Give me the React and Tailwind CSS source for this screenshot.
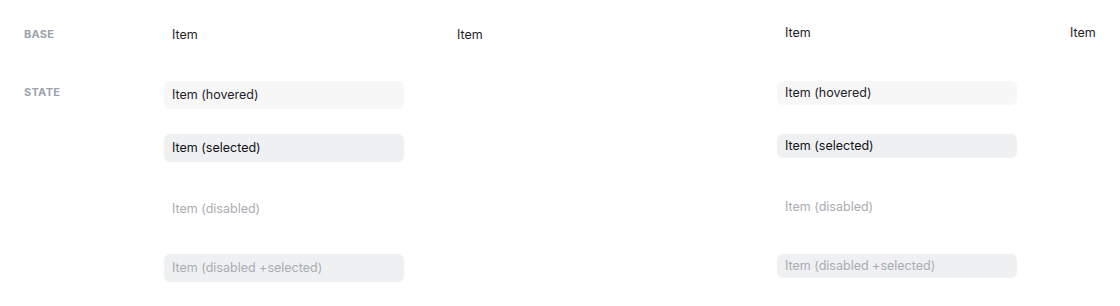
import React from "react";

const font = { fontFamily: "Inter, 'Noto Sans', sans-serif" };

function Item({ children, variant = "base", size = "lg" }) {
  const h = size === "lg" ? "h-[28px]" : "h-[24px]";
  const v = {
    base: "text-[#1f2328]",
    hovered: "bg-[#f7f7f8] text-[#1f2328]",
    selected: "bg-[#eff0f2] text-[#111318]",
    disabled: "text-[#a9adb2]",
    disabledSelected: "bg-[#eff0f2] text-[#a9adb2]",
  }[variant];
  return (
    <div className={`w-[240px] ${h} px-2 rounded-md flex items-center text-[12.5px] leading-none shrink-0 ${v}`}>
      {children}
    </div>
  );
}

function Label({ children, className = "" }) {
  return (
    <div className={`w-[164px] shrink-0 pl-6 text-[11px] font-bold uppercase tracking-wide text-[#9aa3ae] leading-4 ${className}`}>
      {children}
    </div>
  );
}

function StateCol({ size }) {
  return (
    <div className="w-[613px] shrink-0 flex flex-col">
      <div className="h-[53px]">
        <Item variant="hovered" size={size}>Item (hovered)</Item>
      </div>
      <div className="h-[61px]">
        <Item variant="selected" size={size}>Item (selected)</Item>
      </div>
      <div className="h-[59px]">
        <Item variant="disabled" size={size}>Item (disabled)</Item>
      </div>
      <div>
        <Item variant="disabledSelected" size={size}>Item (disabled +selected)</Item>
      </div>
    </div>
  );
}

export default function App() {
  return (
    <div className="w-[1120px] h-[306px] overflow-hidden bg-white pt-[21px]" style={font}>
      <div className="flex h-[60px]">
        <Label className="mt-[5px]">Base</Label>
        <div className="w-[613px] shrink-0 flex gap-[45px]">
          <Item size="lg">Item</Item>
          <Item size="lg">Item</Item>
        </div>
        <div className="w-[613px] shrink-0 flex gap-[45px]">
          <Item size="sm">Item</Item>
          <Item size="sm">Item</Item>
        </div>
      </div>
      <div className="flex">
        <Label className="mt-[3px]">State</Label>
        <StateCol size="lg" />
        <StateCol size="sm" />
      </div>
    </div>
  );
}
